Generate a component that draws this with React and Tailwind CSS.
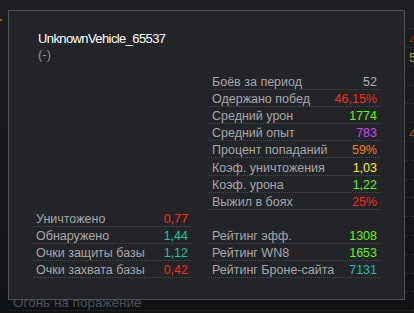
const LEFT = [
  { label: 'Уничтожено', value: '0,77', color: 'text-[#ff2a1e]' },
  { label: 'Обнаружено', value: '1,44', color: 'text-[#14c9a6]' },
  { label: 'Очки защиты базы', value: '1,12', color: 'text-[#14c9a6]' },
  { label: 'Очки захвата базы', value: '0,42', color: 'text-[#ff2a1e]' },
]

const RIGHT = [
  { label: 'Боёв за период', value: '52', color: 'text-[#b4b4b4]' },
  { label: 'Одержано побед', value: '46,15%', color: 'text-[#ff2a1e]' },
  { label: 'Средний урон', value: '1774', color: 'text-[#5ff51a]' },
  { label: 'Средний опыт', value: '783', color: 'text-[#c545ff]' },
  { label: 'Процент попаданий', value: '59%', color: 'text-[#ff7a1e]' },
  { label: 'Коэф. уничтожения', value: '1,03', color: 'text-[#f7f520]' },
  { label: 'Коэф. урона', value: '1,22', color: 'text-[#5ff51a]' },
  { label: 'Выжил в боях', value: '25%', color: 'text-[#ff2a1e]' },
  null,
  { label: 'Рейтинг эфф.', value: '1308', color: 'text-[#5ff51a]' },
  { label: 'Рейтинг WN8', value: '1653', color: 'text-[#5ff51a]' },
  { label: 'Рейтинг Броне-сайта', value: '7131', color: 'text-[#17c2b4]' },
]

// rows of the list behind the tooltip
const BACK = [
  null,
  { value: '4', color: 'text-[#9c1414]' },
  { value: '5', color: 'text-[#a6a323]' },
  null, null, null,
  { value: '4', color: 'text-[#a4561a]' },
  null, null, null, null, null, null, null, null,
  { label: 'Огонь на поражение' },
]

function StatRow({ row }) {
  if (!row) return <div className="h-[17.1px]" />
  return (
    <div className="flex h-[17.1px] items-center justify-between border-b border-dotted border-[#48494d] pl-[3px] pr-[3px] pt-[2px]">
      <span className="text-[#a6a7a9]">{row.label}</span>
      <span className={row.color}>{row.value}</span>
    </div>
  )
}

export default function App() {
  return (
    <div className="relative h-[313px] w-[414px] overflow-hidden bg-gradient-to-b from-[#1d1e21] to-[#111214] font-['Liberation_Sans',Arial,sans-serif] text-[12.5px] leading-[14px]">
      <span className="absolute left-0 top-[19px] h-[2px] w-[2px] bg-[#a0641e]" />

      <div className="w-[430px] pl-[10px] pt-[10.5px]">
        {BACK.map((r, i) => (
          <div key={i} className="grid h-[18.8px] grid-cols-[399px_auto] items-center border-b border-dotted border-[#2d2e32] pt-[3px] text-[13.5px]">
            <span className="pl-[3px] text-[#4d5057]">{r?.label}</span>
            <span className={r?.color}>{r?.value}</span>
          </div>
        ))}
      </div>

      <div className="absolute left-[8px] top-[10px] flex h-[290px] w-[397px] flex-col border border-[#505154] bg-[#232427] pl-[24px] pt-[20px]">
        <div className="ml-[5px] text-[13px] leading-[16px] tracking-[-0.6px] text-white">UnknownVehicle_65537</div>
        <div className="ml-[5px] text-[13px] leading-[16px] text-[#8b919a]">(-)</div>

        <div className="mt-[10px] flex items-end gap-[18px]">
          <div className="w-[158px]">
            {LEFT.map((r) => <StatRow key={r.label} row={r} />)}
          </div>
          <div className="w-[171px]">
            {RIGHT.map((r, i) => <StatRow key={i} row={r} />)}
          </div>
        </div>
      </div>
    </div>
  )
}
